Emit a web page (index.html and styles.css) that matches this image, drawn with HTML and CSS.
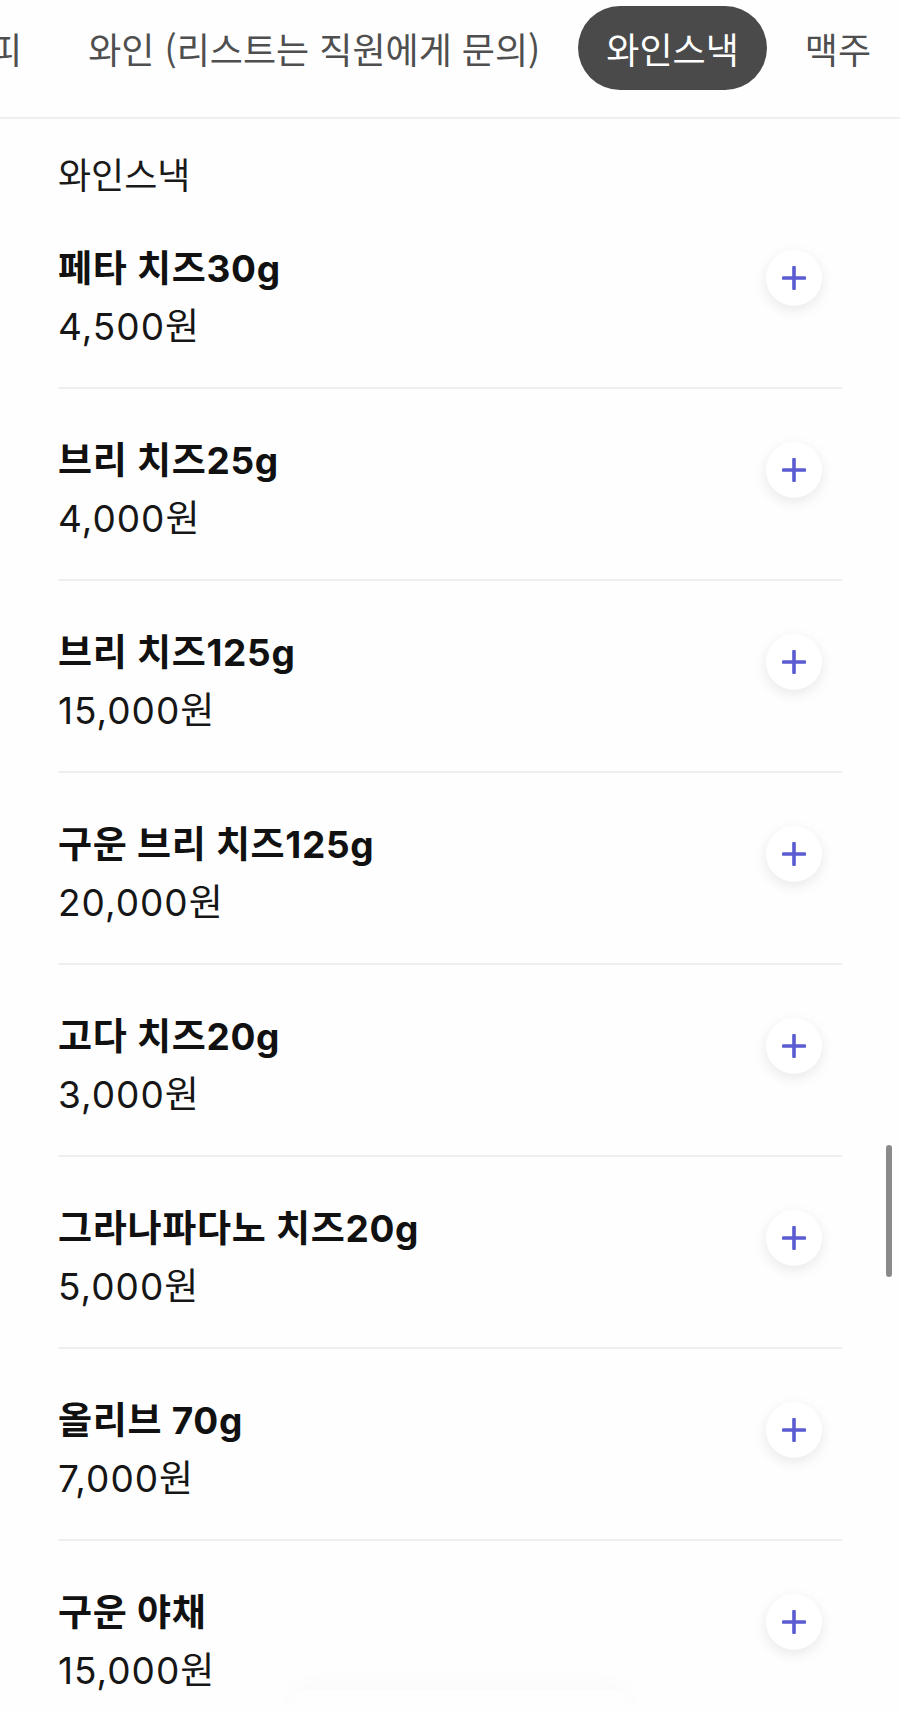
FILE: index.html
```html
<!DOCTYPE html>
<html lang="ko">
<head>
    <meta charset="UTF-8">
    <meta name="viewport" content="width=device-width, initial-scale=1.0">
    <title>와인스낵 메뉴</title>
    <link rel="stylesheet" href="styles.css">
</head>
<body>
    <div class="tabs">
        <div class="tab-track">
            <div class="tab">커피</div>
            <div class="tab">와인 (리스트는 직원에게 문의)</div>
            <div class="tab active">와인스낵</div>
            <div class="tab">맥주</div>
        </div>
    </div>

    <div class="menu">
        <h2 class="menu-title">와인스낵</h2>
        <ul id="menu-list" class="menu-list"></ul>
    </div>

    <div class="scrollbar"></div>
    <div class="bottom-fade"></div>

    <script>
        // 메뉴 데이터
        const menuData = [
            { name: '페타 치즈30g', price: 4500 },
            { name: '브리 치즈25g', price: 4000 },
            { name: '브리 치즈125g', price: 15000 },
            { name: '구운 브리 치즈125g', price: 20000 },
            { name: '고다 치즈20g', price: 3000 },
            { name: '그라나파다노 치즈20g', price: 5000 },
            { name: '올리브 70g', price: 7000 },
            { name: '구운 야채', price: 15000 }
        ];

        const menuList = document.getElementById('menu-list');

        menuData.forEach(item => {
            const li = document.createElement('li');
            li.className = 'menu-item';
            li.innerHTML =
                '<div class="item-info">' +
                    '<div class="item-name">' + item.name + '</div>' +
                    '<div class="item-price">' + item.price.toLocaleString('ko-KR') + '원</div>' +
                '</div>' +
                '<button class="add-btn" aria-label="추가">' +
                    '<svg width="24" height="24" viewBox="0 0 24 24"><path d="M12 1.5v21M1.5 12h21" stroke="#5b5bd2" stroke-width="3.6" stroke-linecap="round"/></svg>' +
                '</button>';
            menuList.appendChild(li);
        });
    </script>
</body>
</html>
```

FILE: styles.css
```css
/* 기본 */
body {
    font-family: Inter, "Noto Sans CJK KR", sans-serif;
    background-color: #fefefe;
    color: #111;
    margin: 0;
    padding: 0;
    overflow: hidden;
}

/* 상단 탭 */
.tabs {
    height: 117px;
    border-bottom: 2px solid #efefef;
    overflow: hidden;
    white-space: nowrap;
}
.tab-track {
    display: flex;
    gap: 10px;
    margin-left: -72px;
    padding-top: 6px;
}
.tab {
    height: 84px;
    line-height: 84px;
    padding: 0 28px;
    border-radius: 42px;
    font-family: "Noto Sans CJK KR", sans-serif;
    font-size: 36px;
    color: #4f4f4f;
    flex-shrink: 0;
}
.tab.active {
    background-color: #4a4a4a;
    color: #fff;
}

/* 메뉴 */
.menu {
    padding: 30px 58px 0;
}
.menu-title {
    margin: 0;
    font-family: "Noto Sans CJK KR", sans-serif;
    font-size: 36px;
    font-weight: normal;
    line-height: 48px;
    color: #1a1a1a;
}
.menu-list {
    list-style: none;
    margin: 0;
    padding: 0;
}
.menu-item {
    display: flex;
    align-items: flex-start;
    justify-content: space-between;
    padding: 48px 20px 36px 0;
    border-bottom: 2px solid #efefef;
}
.item-name {
    font-size: 37px;
    font-weight: bold;
    line-height: 48px;
    letter-spacing: 0.7px;
}
.item-price {
    font-size: 37px;
    line-height: 48px;
    margin-top: 10px;
    color: #161616;
    letter-spacing: 1px;
}
.add-btn {
    width: 56px;
    height: 56px;
    margin-top: 5px;
    border: none;
    border-radius: 50%;
    background-color: #fff;
    box-shadow: 0 4px 14px rgba(0, 0, 0, 0.09);
    display: flex;
    align-items: center;
    justify-content: center;
    padding: 0;
    cursor: pointer;
}

/* 스크롤바 / 하단 */
.scrollbar {
    position: absolute;
    left: 886px;
    top: 1145px;
    width: 6px;
    height: 132px;
    border-radius: 3px;
    background-color: #8a8a8a;
}
.bottom-fade {
    position: absolute;
    left: 290px;
    top: 1690px;
    width: 340px;
    height: 40px;
    border-radius: 20px;
    box-shadow: 0 -6px 24px rgba(0, 0, 0, 0.02);
}
```
